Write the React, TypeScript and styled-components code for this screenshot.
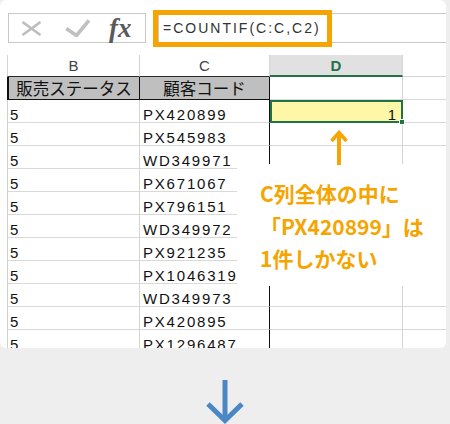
import React from 'react';
import styled, { createGlobalStyle } from 'styled-components';

const GlobalStyle = createGlobalStyle`
  html, body { margin: 0; padding: 0; background: #eeeeee; }
  body { font-family: "Liberation Sans", Arial, sans-serif; }
  *, *::before, *::after { box-sizing: border-box; }
`;

const Page = styled.div`
  width: 450px;
  height: 424px;
  display: flex;
  flex-direction: column;
  overflow: hidden;
  background: #eeeeee;
`;

const Card = styled.div`
  position: relative;
  width: 446px;
  height: 348px;
  flex: none;
  background: #ffffff;
  border-radius: 6px;
  overflow: hidden;
  padding-top: 13px;
`;

const FormulaBar = styled.div`
  display: flex;
  height: 30px;
  padding-left: 8px;
  gap: 12px;
`;

const ButtonBox = styled.div`
  width: 138px;
  height: 30px;
  flex: none;
  border: 1px solid #c9c9c9;
  display: flex;
  align-items: center;
`;

const CancelIcon = styled.svg`
  margin-left: 12px;
  flex: none;
`;

const EnterIcon = styled.svg`
  margin-left: 23px;
  flex: none;
`;

const FxLabel = styled.span`
  margin-left: 19px;
  font-family: "Liberation Serif", "Times New Roman", serif;
  font-style: italic;
  font-weight: bold;
  font-size: 27px;
  line-height: 24px;
  color: #5a5a5a;
  letter-spacing: 0px;
  margin-top: -1px;
`;

const FormulaInput = styled.div`
  position: relative;
  flex: 1;
  height: 30px;
  border: 1px solid #c9c9c9;
  border-right: none;
  display: flex;
  align-items: center;
  padding-left: 4px;
  font-family: "Liberation Sans", Arial, sans-serif;
  font-size: 14px;
  letter-spacing: 2px;
  color: #333333;
`;

const Highlight = styled.div`
  position: absolute;
  left: -6px;
  top: -4px;
  width: 179px;
  height: 37px;
  border: 5px solid #f6a400;
  pointer-events: none;
`;

const Sheet = styled.div`
  margin-top: 12px;
  padding-left: 7px;
`;

const Row = styled.div<{ $h: number }>`
  display: grid;
  grid-template-columns: 133px 130px 133px 1fr;
  height: ${(p) => p.$h}px;
`;

const ColHeader = styled.div<{ $first?: boolean; $last?: boolean; $active?: boolean }>`
  display: flex;
  align-items: center;
  justify-content: center;
  font-family: "Liberation Sans", Arial, sans-serif;
  font-size: 15px;
  color: ${(p) => (p.$active ? '#217346' : '#444444')};
  font-weight: ${(p) => (p.$active ? 'bold' : 'normal')};
  background: ${(p) => (p.$active ? '#e1e1e1' : '#ffffff')};
  border-left: ${(p) => (p.$first ? '1px solid #d4d4d4' : 'none')};
  border-right: ${(p) => (p.$last ? 'none' : '1px solid #d4d4d4')};
  border-bottom: ${(p) =>
    p.$active ? '2px solid #217346' : p.$last ? '1px solid #d4d4d4' : '1px solid #2a2a2a'};
`;

const LabelCell = styled.div<{ $first?: boolean }>`
  display: flex;
  align-items: center;
  justify-content: center;
  background: #bfbfbf;
  font-family: "Noto Sans CJK JP", sans-serif;
  font-size: 16.5px;
  color: #111111;
  border-left: ${(p) => (p.$first ? '2px solid #111111' : 'none')};
  border-right: 1px solid #111111;
  border-bottom: 1px solid #111111;
  white-space: nowrap;
  overflow: hidden;
`;

const DataCell = styled.div<{ $first?: boolean; $edge?: 'black' | 'gray' | 'none'; $pad?: number }>`
  display: flex;
  align-items: flex-end;
  padding-left: ${(p) => p.$pad ?? 2}px;
  font-family: "Liberation Sans", Arial, sans-serif;
  font-size: 15px;
  line-height: 14px;
  letter-spacing: 1.8px;
  color: #111111;
  white-space: nowrap;
  overflow: hidden;
  border-left: ${(p) => (p.$first ? '1px solid #d0d0d0' : 'none')};
  border-right: ${(p) =>
    p.$edge === 'black' ? '1px solid #111111' : p.$edge === 'none' ? 'none' : '1px solid #d4d4d4'};
  border-bottom: 1px solid #d9d9d9;
`;

const ActiveCell = styled.div`
  position: relative;
  display: flex;
  align-items: flex-end;
  justify-content: flex-end;
  padding-right: 5px;
  background: #fff7a8;
  border: 2px solid #217346;
  font-family: "Liberation Sans", Arial, sans-serif;
  font-size: 15px;
  line-height: 13px;
  color: #111111;
`;

const FillHandle = styled.span`
  position: absolute;
  right: -4px;
  bottom: -4px;
  width: 6px;
  height: 6px;
  background: #217346;
  border: 1px solid #ffffff;
`;

const UpArrow = styled.svg`
  position: absolute;
  left: 330px;
  top: 130px;
  z-index: 2;
`;

const Annotation = styled.div`
  position: absolute;
  left: 237px;
  top: 164px;
  width: 209px;
  height: 122px;
  background: #ffffff;
  padding: 13px 0 0 23px;
  font-family: "Noto Sans CJK JP", sans-serif;
  font-weight: bold;
  font-size: 21px;
  line-height: 32.5px;
  color: #f6a400;
  white-space: nowrap;
`;

const ArrowArea = styled.div`
  flex: 1;
  display: flex;
  justify-content: center;
  padding-top: 32px;
`;

const codes = [
  'PX420899',
  'PX545983',
  'WD349971',
  'PX671067',
  'PX796151',
  'WD349972',
  'PX921235',
  'PX1046319',
  'WD349973',
  'PX420895',
  'PX1296487',
];

export default function App() {
  return (
    <Page>
      <GlobalStyle />
      <Card>
        <FormulaBar>
          <ButtonBox>
            <CancelIcon width="21" height="15" viewBox="0 0 21 15">
              <path d="M1.5 1 L19.5 14 M19.5 1 L1.5 14" stroke="#bdbdbd" strokeWidth="2.6" fill="none" />
            </CancelIcon>
            <EnterIcon width="25" height="18" viewBox="0 0 25 18">
              <path d="M1.2 9.5 L11.5 16.5 L24 1.5" stroke="#c0c0c0" strokeWidth="3.6" fill="none" strokeLinejoin="miter" />
            </EnterIcon>
            <FxLabel>fx</FxLabel>
          </ButtonBox>
          <FormulaInput>
            =COUNTIF(C:C,C2)
            <Highlight />
          </FormulaInput>
        </FormulaBar>

        <Sheet>
          <Row $h={22}>
            <ColHeader $first>B</ColHeader>
            <ColHeader>C</ColHeader>
            <ColHeader $active>D</ColHeader>
            <ColHeader $last />
          </Row>
          <Row $h={23}>
            <LabelCell $first>販売ステータス</LabelCell>
            <LabelCell>顧客コード</LabelCell>
            <DataCell />
            <DataCell $edge="none" />
          </Row>
          {codes.map((code, i) => (
            <Row $h={23} key={code}>
              <DataCell $first>5</DataCell>
              <DataCell $edge="black" $pad={3}>
                {code}
              </DataCell>
              {i === 0 ? (
                <ActiveCell>
                  1
                  <FillHandle />
                </ActiveCell>
              ) : (
                <DataCell />
              )}
              <DataCell $edge="none" />
            </Row>
          ))}
        </Sheet>

        <UpArrow width="18" height="35" viewBox="0 0 18 35">
          <path d="M9 2.5 L9 35" stroke="#f6a400" strokeWidth="4" fill="none" />
          <path d="M1.5 11 L9 2.5 L16.5 11" stroke="#f6a400" strokeWidth="3.5" fill="none" />
        </UpArrow>

        <Annotation>
          <div>C列全体の中に</div>
          <div>「PX420899」は</div>
          <div>1件しかない</div>
        </Annotation>
      </Card>
      <ArrowArea>
        <svg width="40" height="44" viewBox="0 0 40 44">
          <path d="M20 0 L20 40" stroke="#4a87c4" strokeWidth="5" fill="none" />
          <path d="M3 24 L20 40.5 L37 24" stroke="#4a87c4" strokeWidth="5" fill="none" />
        </svg>
      </ArrowArea>
    </Page>
  );
}
